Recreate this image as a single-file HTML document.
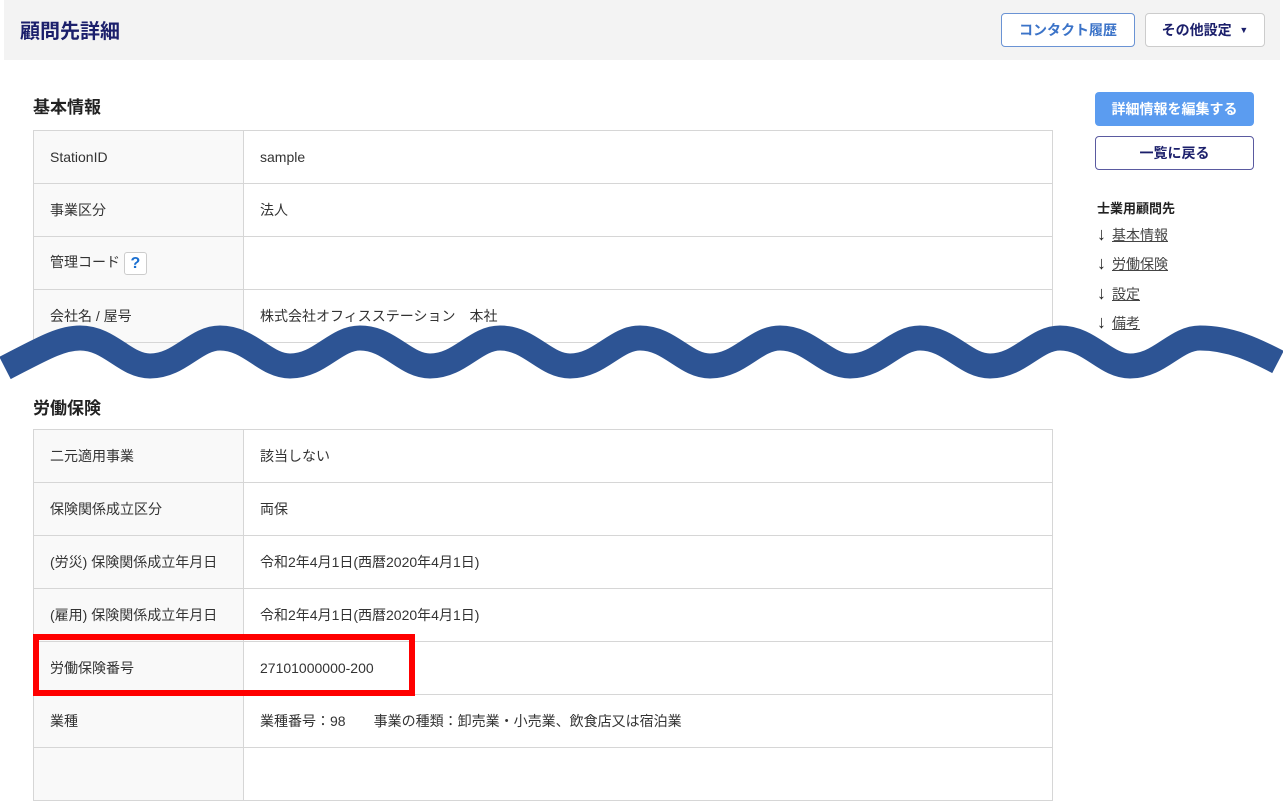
<!DOCTYPE html>
<html><head><meta charset="utf-8"><style>
*{box-sizing:border-box;margin:0;padding:0}
body{width:1283px;height:751px;overflow:hidden;background:#fff;font-family:"Liberation Sans","Noto Sans CJK JP",sans-serif;position:relative;color:#333}
.hdr{position:absolute;left:4px;top:0;width:1276px;height:60px;background:#f3f3f3}
.title{position:absolute;left:20px;top:15px;font-size:20px;font-weight:bold;color:#1b1f6b}
.btn{position:absolute;font-size:14px;font-weight:bold;display:flex;align-items:center;justify-content:center;border-radius:4px;background:#fff}
h2{position:absolute;left:33px;font-size:17px;font-weight:bold;color:#222}
table{position:absolute;left:33px;width:1020px;border-collapse:collapse;font-size:14px}
td{border:1px solid #d6d6d6;height:53px;padding:0 16px;color:#333}
td.l{width:210px;background:#f9f9f9}
.nav{position:absolute;left:1097px;font-size:14px;color:#444}
.nav b{font-size:18px;font-weight:normal;color:#222}
.nav span{text-decoration:underline;margin-left:6px}
</style></head><body>
<div class="hdr"></div>
<div class="title">顧問先詳細</div>
<div class="btn" style="left:1001px;top:13px;width:134px;height:34px;border:1px solid #6a93d4;color:#3b73c8">コンタクト履歴</div>
<div class="btn" style="left:1145px;top:13px;width:120px;height:34px;border:1px solid #ccc;color:#1b1f6b">その他設定&nbsp;&nbsp;<span style="font-size:9px">▼</span></div>

<h2 style="top:93px">基本情報</h2>
<table style="top:130px">
<tr><td class="l">StationID</td><td>sample</td></tr>
<tr><td class="l">事業区分</td><td>法人</td></tr>
<tr><td class="l">管理コード <span style="display:inline-block;width:23px;height:23px;border:1px solid #ccc;border-radius:3px;text-align:center;line-height:21px;color:#1a6fd0;font-weight:bold;font-size:16px;vertical-align:middle;background:#fff">?</span></td><td></td></tr>
<tr><td class="l">会社名 / 屋号</td><td>株式会社オフィスステーション　本社</td></tr>
<tr><td class="l"></td><td></td></tr>
</table>

<div class="btn" style="left:1095px;top:92px;width:159px;height:34px;background:#5b9cf0;color:#fff">詳細情報を編集する</div>
<div class="btn" style="left:1095px;top:136px;width:159px;height:34px;border:1px solid #5a5aa0;color:#1b1f6b">一覧に戻る</div>
<div class="nav" style="top:198px;font-weight:bold;color:#222;font-size:13px">士業用顧問先</div>
<div class="nav" style="top:224px"><b>↓</b><span>基本情報</span></div>
<div class="nav" style="top:253px"><b>↓</b><span>労働保険</span></div>
<div class="nav" style="top:283px"><b>↓</b><span>設定</span></div>
<div class="nav" style="top:312px"><b>↓</b><span>備考</span></div>

<div style="position:absolute;left:0;top:352px;width:1283px;height:76px;background:#fff"></div>
<svg style="position:absolute;left:0;top:0" width="1283" height="751">
<path d="M5 368 C40 350 60 338 80 338 C110 338 125 366 150 366 C180 366 195 338 220 338 C250 338 265 366 290 366 C320 366 335 338 360 338 C390 338 405 366 430 366 C460 366 475 338 500 338 C530 338 545 366 570 366 C600 366 615 338 640 338 C670 338 685 366 710 366 C740 366 755 338 780 338 C810 338 825 366 850 366 C880 366 895 338 920 338 C950 338 965 366 990 366 C1020 366 1035 338 1060 338 C1090 338 1105 366 1130 366 C1160 366 1175 338 1200 338 C1230 338 1255 350 1278 362" fill="none" stroke="#2d5494" stroke-width="25"/>
</svg>

<h2 style="top:394px">労働保険</h2>
<table style="top:429px">
<tr><td class="l">二元適用事業</td><td>該当しない</td></tr>
<tr><td class="l">保険関係成立区分</td><td>両保</td></tr>
<tr><td class="l">(労災) 保険関係成立年月日</td><td>令和2年4月1日(西暦2020年4月1日)</td></tr>
<tr><td class="l">(雇用) 保険関係成立年月日</td><td>令和2年4月1日(西暦2020年4月1日)</td></tr>
<tr><td class="l">労働保険番号</td><td>27101000000-200</td></tr>
<tr><td class="l">業種</td><td>業種番号：98　　事業の種類：卸売業・小売業、飲食店又は宿泊業</td></tr>
<tr><td class="l"></td><td></td></tr>
</table>
<div style="position:absolute;left:33px;top:634px;width:382px;height:62px;border:6px solid #f00"></div>
</body></html>
